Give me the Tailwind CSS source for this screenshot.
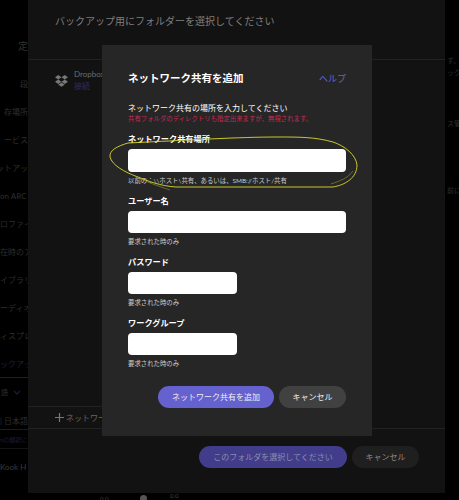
<!DOCTYPE html>
<html lang="ja">
<head>
  <meta charset="UTF-8">
  <title>ネットワーク共有を追加</title>
  <script src="https://cdn.jsdelivr.net/npm/@tailwindcss/browser@4"></script>
</head>
<body class="bg-black font-['Lato','Noto_Sans_CJK_JP',sans-serif]">
  <div class="relative flex w-[459px] h-[500px] overflow-hidden bg-black">

    <!-- settings sidebar, cut off by the dialog behind -->
    <div class="w-[28px] shrink-0 overflow-hidden whitespace-nowrap text-[8px] text-[#2e2e2e] flex flex-col items-end">
      <div class="h-[36px] mt-[28px] flex items-center text-[10px] text-[#333]">定</div>
      <div class="h-[28px] mt-[6px] flex items-center justify-end w-full">段</div>
      <div class="h-[28px] flex items-center">存場所</div>
      <div class="h-[28px] flex items-center">ービス</div>
      <div class="h-[28px] flex items-center w-full justify-end overflow-hidden"><span>ットアッ</span></div>
      <div class="h-[28px] flex items-center w-full">on ARC</div>
      <div class="h-[28px] flex items-center w-full">ロファイ</div>
      <div class="h-[28px] flex items-center w-full">在時のア</div>
      <div class="h-[28px] flex items-center w-full">イブラリ</div>
      <div class="h-[28px] flex items-center w-full">ーディオ</div>
      <div class="h-[28px] flex items-center w-full">ィスプレ</div>
      <div class="h-[28px] flex items-center w-full text-[#231f45] border-b border-[#1f1b40]">ックアッ</div>
      <div class="h-[28px] flex items-center justify-between w-full pr-[7px] pl-[1px] text-[7px]">語
        <svg width="8" height="5" viewBox="0 0 8 5" fill="none" stroke="#1e1b3c" stroke-width="1.2"><path d="M1 1l3 3 3-3"/></svg>
      </div>
      <div class="h-[24px] flex items-end w-full border-b border-[#1c1c1c] pb-[2px]">| 日本語</div>
      <div class="h-[18px] flex items-center w-full text-[6px] text-[#1e1b3c]">nの翻訳に</div>
      <div class="h-[36px] flex items-center w-full text-[#3a3a3a] border-t border-[#141414]">Kook H</div>
    </div>

    <!-- folder picker behind the dialog -->
    <div class="w-[417px] h-[493px] shrink-0 bg-[#121212] flex flex-col">
      <div class="h-[60px] shrink-0 px-[27px] pt-[13px] border-b border-[#222] text-[10px] leading-[16px] text-[#7f7f7f]">バックアップ用にフォルダーを選択してください</div>
      <div class="flex-1 px-[27px] pt-[8px]">
        <div class="flex items-center gap-[6px]">
          <svg width="13" height="13" viewBox="0 0 24 24" fill="#777"><path d="M6 2 0 6.2l5.9 4.1L12 6.2zm12 0-6 4.2 6.1 4.1L24 6.2zM0 14.4l5.9 4 6.1-4.1-6.1-4zm18.1-4.1L12 14.3l6.1 4.1 5.9-4zM6 19.7l6 4 6-4-6-4z"/></svg>
          <div class="text-[8px] leading-[12px]">
            <div class="text-[#6c6c6c]">Dropbox</div>
            <div class="text-[#2f2b63]">接続</div>
          </div>
        </div>
      </div>
      <div class="h-[22px] shrink-0 w-[320px] border-t border-[#222] px-[27px] flex items-center gap-[2px] text-[8px] text-[#666]">
        <svg width="9" height="9" viewBox="0 0 9 9" stroke="#777" stroke-width="1.2"><path d="M4.5 0v9M0 4.5h9"/></svg>
        <span>ネットワーク共有を追加</span>
      </div>
      <div class="h-[65px] shrink-0 border-t border-[#222] flex justify-end items-start gap-[5px] pt-[17px] pr-[26px]">
        <div class="h-[22px] w-[148px] rounded-full bg-[#413d8a] text-[#8d8cae] text-[8px] flex items-center justify-center">このフォルダを選択してください</div>
        <div class="h-[22px] w-[67px] rounded-full bg-[#1f1f1f] text-[#8a8a8a] text-[8px] flex items-center justify-center">キャンセル</div>
      </div>
    </div>

    <!-- page text showing to the right -->
    <div class="flex-1 overflow-hidden whitespace-nowrap text-[7px] leading-[12px] text-[#2e2e2e] pl-[2px] pt-[54px]">
      <div>す。</div>
      <div>ック</div>
      <div class="mt-[39px]">ス管</div>
      <div class="mt-[55px]">前に</div>
    </div>

    <div class="absolute left-[100px] bottom-[-3px] flex items-center gap-[32px] text-[6px] text-[#444]">
      <span>0.0</span>
      <span class="size-[7px] rounded-full bg-[#555]"></span>
    </div>
    <div class="absolute left-[170px] bottom-0 text-[6px] text-[#444]">0.0</div>

    <!-- dialog -->
    <div class="absolute left-[102px] top-[45px] w-[270px] h-[391px] bg-[#262626] px-[26px] text-white">
      <div class="flex justify-between items-center mt-[26px] h-[16px]">
        <h2 class="text-[10.5px] font-bold">ネットワーク共有を追加</h2>
        <a class="text-[9px] text-[#6765c8]">ヘルプ</a>
      </div>
      <p class="mt-[15px] text-[8px] leading-[12px]">ネットワーク共有の場所を入力してください</p>
      <p class="text-[6.4px] leading-[10px] text-[#c42a55]">共有フォルダのディレクトリも指定出来ますが、無視されます。</p>

      <label class="block mt-[9px] text-[8.2px] leading-[12px] font-bold">ネットワーク共有場所</label>
      <div class="mt-[4px] h-[23px] w-[218px] rounded-[4px] bg-white"></div>
      <p class="mt-[4px] text-[6.4px] leading-[10px] text-[#ccc]">以前の：\\ホスト\共有、あるいは、SMB://ホスト/共有</p>

      <label class="block mt-[9px] text-[8.2px] leading-[12px] font-bold">ユーザー名</label>
      <div class="mt-[4px] h-[22px] w-[218px] rounded-[4px] bg-white"></div>
      <p class="mt-[4px] text-[6.4px] leading-[10px] text-[#ccc]">要求された時のみ</p>

      <label class="block mt-[9px] text-[8.2px] leading-[12px] font-bold">パスワード</label>
      <div class="mt-[4px] h-[22px] w-[109px] rounded-[4px] bg-white"></div>
      <p class="mt-[4px] text-[6.4px] leading-[10px] text-[#ccc]">要求された時のみ</p>

      <label class="block mt-[9px] text-[8.2px] leading-[12px] font-bold">ワークグループ</label>
      <div class="mt-[4px] h-[22px] w-[109px] rounded-[4px] bg-white"></div>
      <p class="mt-[4px] text-[6.4px] leading-[10px] text-[#ccc]">要求された時のみ</p>

      <div class="mt-[17px] flex justify-end gap-[5px] text-[8px]">
        <button class="h-[22px] w-[116px] rounded-full bg-[#6561cf] text-[#eee]">ネットワーク共有を追加</button>
        <button class="h-[22px] w-[67px] rounded-full bg-[#414141] text-[#eee]">キャンセル</button>
      </div>
    </div>

    <!-- yellow hand-drawn circle around the field -->
    <svg class="absolute left-0 top-0 pointer-events-none" width="459" height="500" viewBox="0 0 459 500" fill="none" stroke="#dcd82c" stroke-width="0.9">
      <path d="M128 143C118 146 109 150 110 157C112 165 124 172 138 177C148 181 160 186 176 187L333 187C345 185 357 178 357 165C356 155 345 146 333 142C315 137 300 137 277 137C240 137 190 140 128 143Z"/>
      <path d="M133 175C146 182 158 186 170 190M353 171C348 178 340 181 331 184" stroke="#9a9730" stroke-width="0.6"/>
    </svg>
  </div>
</body>
</html>
